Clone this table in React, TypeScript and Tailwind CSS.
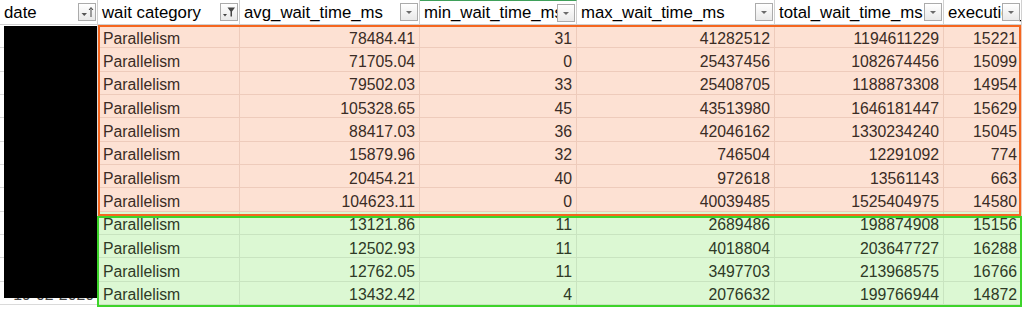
import React from "react";

const FONT = { fontFamily: '"Liberation Sans", Arial, sans-serif' };

type Kind = "sort" | "filter" | "drop";

function FilterBtn({ kind }: { kind: Kind }) {
  return (
    <div className="absolute right-[1px] top-[3px] w-[18px] h-[18px] border border-[#ababab] bg-gradient-to-b from-white to-[#e9e9e9] flex items-center justify-center">
      {kind === "drop" && (
        <svg width="10" height="10" viewBox="0 0 10 10">
          <path d="M2 4 L8 4 L5 7 Z" fill="#6b6b6b" />
        </svg>
      )}
      {kind === "sort" && (
        <svg width="14" height="14" viewBox="0 0 14 14">
          <path d="M1.5 8 L7 8 L4.25 11 Z" fill="#555" />
          <path d="M11 12 L11 3" stroke="#444" strokeWidth="1" />
          <path d="M9 5 L11 2.5 L13 5" stroke="#444" strokeWidth="1" fill="none" />
        </svg>
      )}
      {kind === "filter" && (
        <svg width="14" height="14" viewBox="0 0 14 14">
          <path d="M1 9 L5 9 L3 11.5 Z" fill="#444" />
          <path d="M5.5 2.5 L13 2.5 L10 6.5 L10 11.5 L8.5 11.5 L8.5 6.5 Z" fill="#444" />
        </svg>
      )}
    </div>
  );
}

const headers: { label: string; kind: Kind }[] = [
  { label: "date", kind: "sort" },
  { label: "wait category", kind: "filter" },
  { label: "avg_wait_time_ms", kind: "drop" },
  { label: "min_wait_time_ms", kind: "drop" },
  { label: "max_wait_time_ms", kind: "drop" },
  { label: "total_wait_time_ms", kind: "drop" },
  { label: "execution_count", kind: "drop" },
];

const orangeRows = [
  ["78484.41", "31", "41282512", "1194611229", "15221"],
  ["71705.04", "0", "25437456", "1082674456", "15099"],
  ["79502.03", "33", "25408705", "1188873308", "14954"],
  ["105328.65", "45", "43513980", "1646181447", "15629"],
  ["88417.03", "36", "42046162", "1330234240", "15045"],
  ["15879.96", "32", "746504", "12291092", "774"],
  ["20454.21", "40", "972618", "13561143", "663"],
  ["104623.11", "0", "40039485", "1525404975", "14580"],
];

const greenRows = [
  ["13121.86", "11", "2689486", "198874908", "15156"],
  ["12502.93", "11", "4018804", "203647727", "16288"],
  ["12762.05", "11", "3497703", "213968575", "16766"],
  ["13432.42", "4", "2076632", "199766944", "14872"],
];

const GRID =
  "grid grid-cols-[98px_142px_180px_157px_198px_169px_78px_2px]";

function DataRow({ vals, tone }: { vals: string[]; tone: "o" | "g" }) {
  const cell =
    tone === "o"
      ? "h-[23.33px] border-r border-b border-[#eecbbb] bg-[#fde1d3] text-[#3a2c25] overflow-hidden whitespace-nowrap flex items-center pt-[4px]"
      : "h-[23.33px] border-r border-b border-[#c9e4c0] bg-[#dcf8d3] text-[#2e3a26] overflow-hidden whitespace-nowrap flex items-center pt-[4px]";
  return (
    <div className={GRID}>
      <div className="h-[23.33px] border-r border-b border-[#dadada] bg-white text-[#444] overflow-hidden whitespace-nowrap flex items-center justify-end pr-[3px] pt-[4px]">
        19-02-2020
      </div>
      <div className={`${cell} pl-[5px]`}>Parallelism</div>
      {vals.map((v, i) => (
        <div key={i} className={`${cell} justify-end pr-[4px]`}>
          {v}
        </div>
      ))}
      <div className="h-[23.33px] bg-white" />
    </div>
  );
}

export default function App() {
  return (
    <div
      className="relative w-[1024px] h-[309px] bg-white overflow-hidden text-[15.8px] leading-[19px]"
      style={FONT}
    >
      <div className={GRID}>
        {headers.map((h, i) => (
          <div
            key={i}
            className={
              i === 3
                ? "relative h-[25px] border-r border-b border-[#d0d0d0] border-t border-t-[#3fa05a] overflow-hidden whitespace-nowrap flex items-center pl-[4px] text-[16.8px] text-black bg-white"
                : "relative h-[25px] border-r border-b border-[#d0d0d0] overflow-hidden whitespace-nowrap flex items-center pl-[4px] text-[16.8px] text-black bg-white"
            }
          >
            {h.label}
            <FilterBtn kind={h.kind} />
          </div>
        ))}
        <div className="h-[25px] bg-white" />
      </div>
      {orangeRows.map((r, i) => (
        <DataRow key={"o" + i} vals={r} tone="o" />
      ))}
      {greenRows.map((r, i) => (
        <DataRow key={"g" + i} vals={r} tone="g" />
      ))}

      {/* redaction over date column */}
      <div className="absolute left-[4px] top-[26px] w-[93px] h-[272px] bg-black" />
      {/* highlight boxes */}
      <div className="absolute left-[98px] top-[25px] w-[923px] h-[191px] border-[2.5px] border-[#f5661f]" />
      <div className="absolute left-[97px] top-[216px] w-[925px] h-[91px] border-[2.5px] border-[#3dd42a]" />
    </div>
  );
}
